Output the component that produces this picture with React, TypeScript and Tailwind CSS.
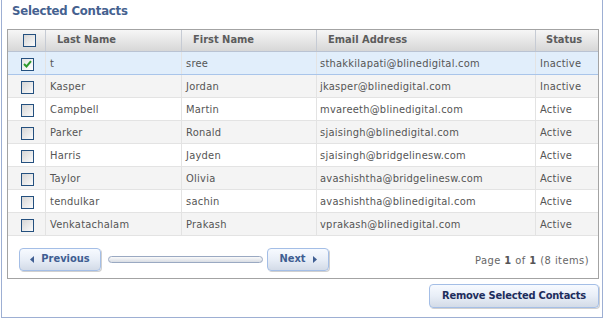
import React from "react";

const rows = [
  { last: "t", first: "sree", email: "sthakkilapati@blinedigital.com", status: "Inactive", checked: true },
  { last: "Kasper", first: "Jordan", email: "jkasper@blinedigital.com", status: "Inactive" },
  { last: "Campbell", first: "Martin", email: "mvareeth@blinedigital.com", status: "Active" },
  { last: "Parker", first: "Ronald", email: "sjaisingh@blinedigital.com", status: "Active" },
  { last: "Harris", first: "Jayden", email: "sjaisingh@bridgelinesw.com", status: "Active" },
  { last: "Taylor", first: "Olivia", email: "avashishtha@bridgelinesw.com", status: "Active" },
  { last: "tendulkar", first: "sachin", email: "avashishtha@blinedigital.com", status: "Active" },
  { last: "Venkatachalam", first: "Prakash", email: "vprakash@blinedigital.com", status: "Active" },
];

const FONT = "font-['DejaVu_Sans_Condensed','DejaVu_Sans',sans-serif]";

function Check({ checked }: { checked?: boolean }) {
  return (
    <div
      className={
        "w-[13px] h-[13px] border border-[#24507f] flex items-center justify-center " +
        (checked ? "bg-gradient-to-br from-[#e4e4e4] to-white" : "bg-gradient-to-br from-[#d6d6d6] to-[#fbfbfb]")
      }
    >
      {checked && (
        <svg width="9" height="8" viewBox="0 0 9 8">
          <path d="M1 4 L3.5 6.5 L8 1.2" stroke="#2e9a2e" strokeWidth="2" fill="none" />
        </svg>
      )}
    </div>
  );
}

const cols = "grid grid-cols-[38px_136px_135px_219px_62px]";

export default function App() {
  return (
    <div className={`w-[606px] h-[319px] bg-white ${FONT}`}>
      <div className="ml-[1px] w-[602px] h-[318px] border-l border-r border-b border-[#9dafd3] flex flex-col">
        <div className="h-[29px] pl-[10px] pt-[1px] text-[13px] font-bold text-[#45618f] leading-[20px] tracking-[-0.2px]">
          Selected Contacts
        </div>
        <div className="ml-[5px] w-[592px] border border-[#a3a3a3]">
          {/* header */}
          <div className={`${cols} h-[22px] border-b border-[#b9c3d3] bg-gradient-to-b from-[#f6f6f6] to-[#d7d7d7] text-[11px] font-bold text-[#5c5c5c]`}>
            <div className="flex items-center pl-[15px] border-r border-r-[#c6cbd4]">
              <Check />
            </div>
            <div className="flex items-center pl-[11px] border-r border-r-[#c6cbd4]">Last Name</div>
            <div className="flex items-center pl-[11px] border-r border-r-[#c6cbd4]">First Name</div>
            <div className="flex items-center pl-[11px] border-r border-r-[#c6cbd4]">Email Address</div>
            <div className="flex items-center pl-[10px]">Status</div>
          </div>
          {rows.map((r, i) => {
            const bg = r.checked ? "bg-[#e1eefb]" : i % 2 === 1 ? "bg-[#f4f4f4]" : "bg-white";
            const bb = r.checked ? "border-[#a9c5ea]" : "border-[#e3e3e3]";
            return (
              <div key={i} className={`${cols} h-[23px] border-b ${bb} ${bg} text-[11px] text-[#555555] tracking-[0.25px]`}>
                <div className="flex items-center pl-[13px] pt-[2px] border-r border-r-[#e3e3e3]">
                  <Check checked={r.checked} />
                </div>
                <div className="flex items-center pl-[4px] pt-[2px] border-r border-r-[#e3e3e3]">{r.last}</div>
                <div className="flex items-center pl-[4px] pt-[2px] border-r border-r-[#e3e3e3]">{r.first}</div>
                <div className="flex items-center pl-[3px] pt-[2px] border-r border-r-[#e3e3e3]">{r.email}</div>
                <div className="flex items-center pl-[4px] pt-[2px]">{r.status}</div>
              </div>
            );
          })}
          {/* pager */}
          <div className="h-[42px] flex items-start pl-[11px] pt-[12px] pr-[9px]">
            <button className="w-[82px] h-[23px] rounded-[4px] border border-[#a4bee6] bg-gradient-to-b from-[#f7faff] via-[#e8eef7] to-[#d3dbe7] shadow-[1px_1px_0_#d0d0d0] flex items-center justify-center gap-[7px] text-[11px] font-bold text-[#3f5e92]">
              <svg width="4" height="7" viewBox="0 0 4 7"><path d="M4 0 L0 3.5 L4 7 Z" fill="#3f5e92" /></svg>
              Previous
            </button>
            <div className="ml-[7px] mt-[8px] w-[155px] h-[7px] rounded-full border border-[#9aa9c2] bg-gradient-to-b from-[#fafafa] to-[#d9dde4]" />
            <button className="ml-[4px] w-[62px] h-[23px] rounded-[4px] border border-[#a4bee6] bg-gradient-to-b from-[#f7faff] via-[#e8eef7] to-[#d3dbe7] shadow-[1px_1px_0_#d0d0d0] flex items-center justify-center gap-[7px] text-[11px] font-bold text-[#3f5e92]">
              Next
              <svg width="4" height="7" viewBox="0 0 4 7"><path d="M0 0 L4 3.5 L0 7 Z" fill="#3f5e92" /></svg>
            </button>
            <div className="ml-auto mt-[5px] text-[11px] text-[#666666] tracking-[0.45px]">
              Page <span className="font-bold text-[#555555]">1</span> of <span className="font-bold text-[#555555]">1</span> (8 items)
            </div>
          </div>
        </div>
        <div className="flex justify-end pr-[3px] pt-[5px]">
          <button className="w-[170px] h-[24px] rounded-[4px] border border-[#a4bee6] bg-gradient-to-b from-[#f7faff] via-[#e8eef7] to-[#d3dbe7] shadow-[1px_1px_0_#d0d0d0] flex items-center justify-center text-[11px] font-bold text-[#1d2d5c] tracking-[-0.2px]">
            Remove Selected Contacts
          </button>
        </div>
      </div>
    </div>
  );
}
